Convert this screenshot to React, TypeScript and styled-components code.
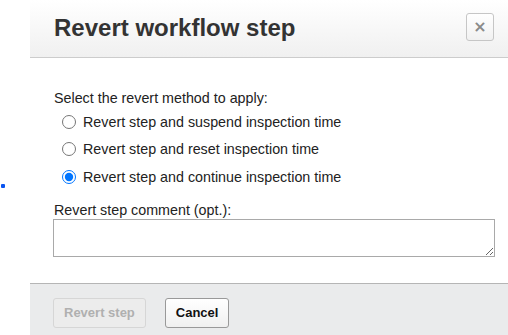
import React from 'react';
import styled, { createGlobalStyle } from 'styled-components';

const GlobalStyle = createGlobalStyle`
  html, body {
    margin: 0;
    padding: 0;
    background: #fff;
    overflow: hidden;
  }
  body {
    font-family: "Liberation Sans", Arial, sans-serif;
    font-size: 14.3px;
    color: #222;
  }
`;

const Page = styled.div`
  display: flex;
  width: 508px;
  height: 335px;
`;

const Gutter = styled.div`
  width: 30px;
  flex-shrink: 0;
  padding-top: 184px;
  box-sizing: border-box;
`;

const Bullet = styled.div`
  width: 4px;
  height: 4px;
  margin-left: 1px;
  background: #0a54f0;
  border-radius: 1px;
`;

const Dialog = styled.div`
  flex: 1;
  display: flex;
  flex-direction: column;
  background: #fff;
`;

const Header = styled.div`
  height: 57px;
  display: flex;
  align-items: center;
  justify-content: space-between;
  padding: 0 14px 0 24px;
  background: linear-gradient(#ffffff, #f0f0f0);
  border-bottom: 1px solid #cccccc;
`;

const Title = styled.h2`
  margin: 0 0 1px;
  font-size: 24px;
  font-weight: bold;
  color: #333;
`;

const CloseButton = styled.button`
  align-self: flex-start;
  margin-top: 13px;
  width: 28px;
  height: 28px;
  padding: 0;
  border: 1px solid #c6c6c6;
  border-radius: 3px;
  background: linear-gradient(#ffffff, #f1f1f1);
  color: #8a8a8a;
  font-family: "DejaVu Sans", sans-serif;
  font-size: 16px;
  font-weight: bold;
  line-height: 1;
  display: flex;
  align-items: center;
  justify-content: center;
`;

const Body = styled.div`
  padding: 30px 13px 26px 24px;
  display: flex;
  flex-direction: column;
`;

const Label = styled.div<{ $gap?: number }>`
  line-height: ${p => (p.$gap ? 17 : 20)}px;
  margin-top: ${p => p.$gap || 0}px;
`;

const Options = styled.div`
  display: flex;
  flex-direction: column;
`;

const Option = styled.label`
  height: 27.5px;
  display: flex;
  align-items: center;
  padding-left: 8px;
  gap: 4px;
`;

const Radio = styled.input`
  width: 14px;
  height: 14px;
  margin: 0 3px 0 0;
`;

const Comment = styled.textarea`
  height: 38px;
  box-sizing: border-box;
  border: 1px solid #a9a9a9;
  margin: 0 0 0 -1px;
  padding: 2px;
  font-family: inherit;
  font-size: 14px;
`;

const Footer = styled.div`
  flex: 1;
  background: #eaebec;
  border-top: 1px solid #b5b5b5;
  display: flex;
  align-items: flex-start;
  gap: 19px;
  padding: 14px 0 0 23px;
`;

const Button = styled.button<{ $disabled?: boolean }>`
  height: 30px;
  padding: 0 10px;
  border-radius: 3px;
  font-family: "Liberation Sans", Arial, sans-serif;
  font-size: 13px;
  font-weight: bold;
  border: 1px solid ${p => (p.$disabled ? '#d6d6d6' : '#999999')};
  color: ${p => (p.$disabled ? '#b0b0b0' : '#111')};
  background: ${p => (p.$disabled ? '#ececec' : 'linear-gradient(#ffffff, #f0f0f0)')};
`;

export default function App() {
  return (
    <>
      <GlobalStyle />
      <Page>
        <Gutter>
          <Bullet />
        </Gutter>
        <Dialog>
          <Header>
            <Title>Revert workflow step</Title>
            <CloseButton>×</CloseButton>
          </Header>
          <Body>
            <Label>Select the revert method to apply:</Label>
            <Options>
              <Option>
                <Radio type="radio" name="method" />
                Revert step and suspend inspection time
              </Option>
              <Option>
                <Radio type="radio" name="method" />
                Revert step and reset inspection time
              </Option>
              <Option>
                <Radio type="radio" name="method" defaultChecked />
                Revert step and continue inspection time
              </Option>
            </Options>
            <Label $gap={11}>Revert step comment (opt.):</Label>
            <Comment />
          </Body>
          <Footer>
            <Button $disabled disabled>Revert step</Button>
            <Button>Cancel</Button>
          </Footer>
        </Dialog>
      </Page>
    </>
  );
}
